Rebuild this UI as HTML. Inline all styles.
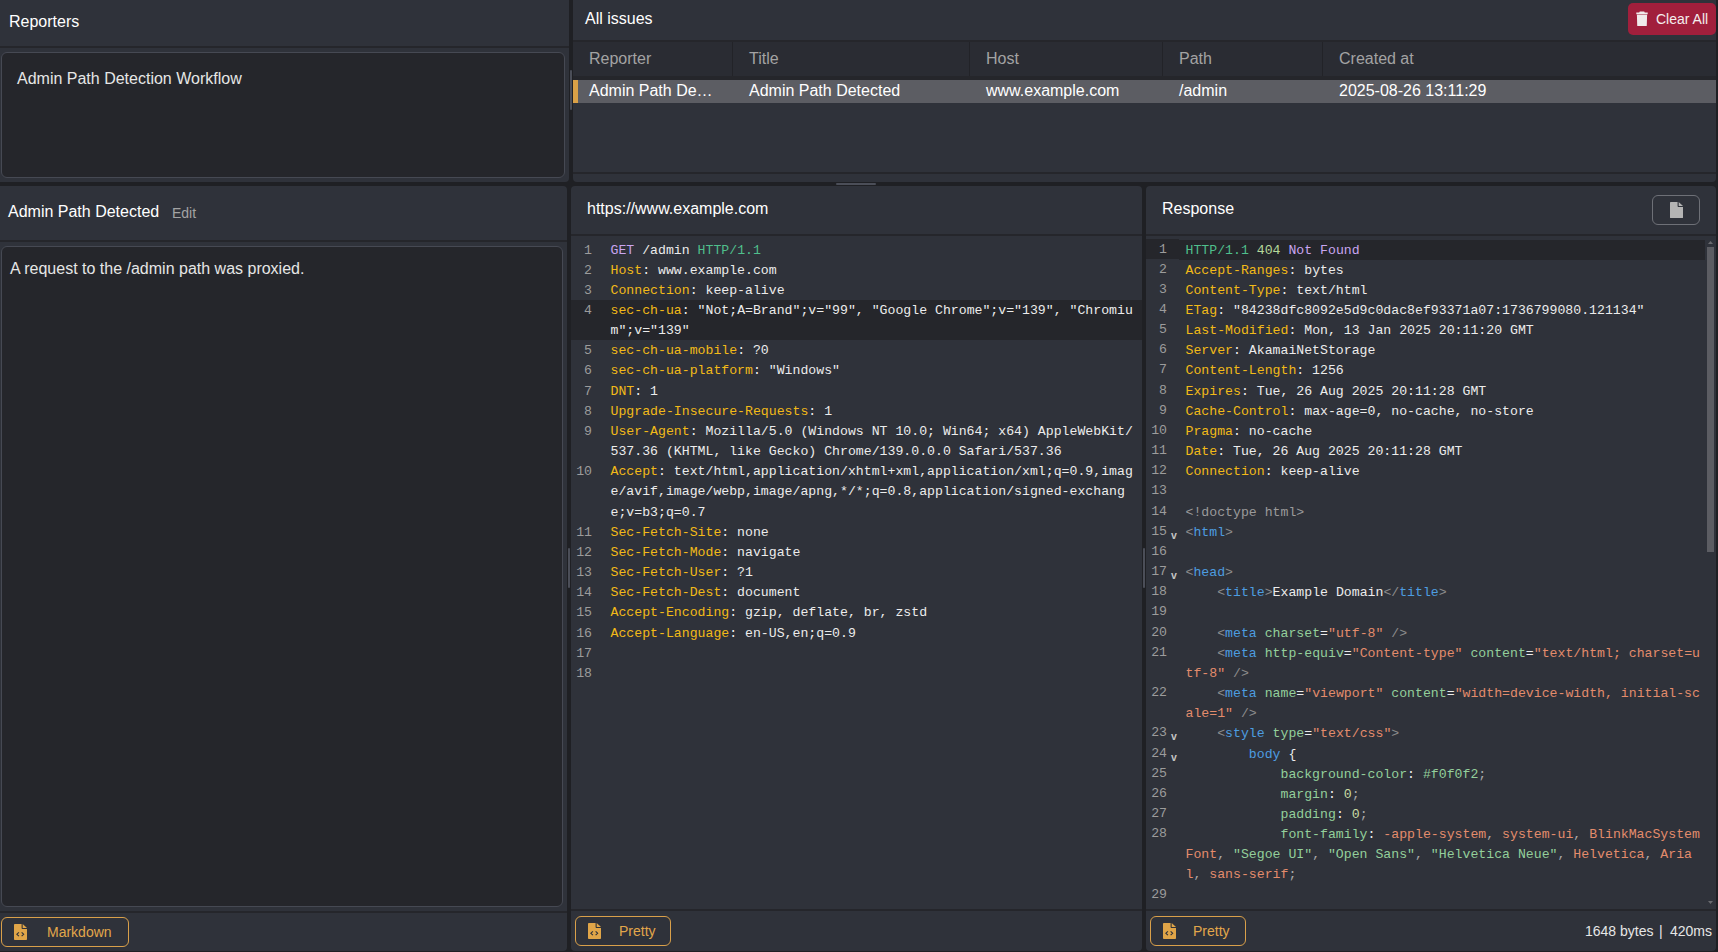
<!DOCTYPE html>
<html><head><meta charset="utf-8">
<style>
*{box-sizing:border-box;margin:0;padding:0}
html,body{width:1718px;height:952px;overflow:hidden;background:#1f2024;font-family:"Liberation Sans",sans-serif;color:#fff}
.p{position:absolute;background:#2f323a;border-radius:4px;overflow:hidden}
.a{position:absolute;white-space:pre}
.ln{position:absolute;background:#25262b}
.t16{font-size:16px;line-height:16px}
.t14{font-size:14px;line-height:14px}
.box{position:absolute;background:#25262b;border:1px solid #464953;border-radius:6px}
.hd{color:#a3a3a3}
.btn{position:absolute;border:1px solid #d9a04a;border-radius:6px;color:#e2a74b}
.code{font-family:"Liberation Mono",monospace;font-size:13.2px;line-height:20.16px}
.code .r{position:absolute;left:39.5px;white-space:pre;height:20.16px}
.num{color:#9c9c9c;position:absolute;left:0;width:21px;text-align:right;white-space:pre}
.hl{position:absolute;left:0;right:0;background:#25262b}
.resp .hl{right:11px;left:33px;margin-top:1px}
.resp .hlg{position:absolute;left:0;width:33px;background:#25262b}
.fold{position:absolute;left:25px;font-family:"Liberation Sans",sans-serif;font-size:10.5px;font-weight:bold;color:#c4c4c4;margin-top:3px}
.xt{color:#4d9de0}
.xb{color:#8c8c8c}
.xa{color:#93cf9b}
.xq{color:#e38c6c}
.xn{color:#c9dca4}
.xc{color:#9a9a9a}
.xp{color:#a9a9a9}
.xk{color:#f2ba18}
.xv{color:#ececec}
.xm{color:#c9a5f0}
.xg{color:#4fbf8c}
.xs{color:#b5d89a}
</style></head><body>

<!-- top-left Reporters panel -->
<div class="p" style="left:0;top:0;width:569px;height:182px;border-radius:0 0 4px 0">
  <div class="a t16" style="left:9px;top:14px">Reporters</div>
  <div class="ln" style="left:0;top:46px;width:569px;height:2px"></div>
  <div class="box" style="left:1px;top:52px;width:564px;height:126px"></div>
  <div class="a t16" style="left:17px;top:71px;color:#e6e6e6">Admin Path Detection Workflow</div>
</div>

<!-- top-right All issues panel -->
<div class="p" style="left:573px;top:0;width:1143px;height:182px;border-radius:0 0 4px 4px">
  <div class="a t16" style="left:12px;top:11px">All issues</div>
  <div class="ln" style="left:0;top:40px;width:1143px;height:2px"></div>
  <div style="position:absolute;left:0;top:42px;width:1143px;height:34px;background:#2a2c33"></div>
  <div style="position:absolute;left:159px;top:42px;width:1px;height:34px;background:#222328"></div>
  <div style="position:absolute;left:396px;top:42px;width:1px;height:34px;background:#222328"></div>
  <div style="position:absolute;left:589px;top:42px;width:1px;height:34px;background:#222328"></div>
  <div style="position:absolute;left:749px;top:42px;width:1px;height:34px;background:#222328"></div>
  <div class="ln" style="left:0;top:76px;width:1143px;height:4px"></div>
  <div class="a t16 hd" style="left:16px;top:51px">Reporter</div>
  <div class="a t16 hd" style="left:176px;top:51px">Title</div>
  <div class="a t16 hd" style="left:413px;top:51px">Host</div>
  <div class="a t16 hd" style="left:606px;top:51px">Path</div>
  <div class="a t16 hd" style="left:766px;top:51px">Created at</div>
  <div style="position:absolute;left:0;top:80px;width:1143px;height:23px;background:#5c5d63"></div>
  <div style="position:absolute;left:0;top:80px;width:5px;height:23px;background:#daa147"></div>
  <div class="a t16" style="left:16px;top:83px">Admin Path De…</div>
  <div class="a t16" style="left:176px;top:83px">Admin Path Detected</div>
  <div class="a t16" style="left:413px;top:83px">www.example.com</div>
  <div class="a t16" style="left:606px;top:83px">/admin</div>
  <div class="a t16" style="left:766px;top:83px">2025-08-26 13:11:29</div>
  <div class="ln" style="left:0;top:172px;width:1143px;height:2px"></div>
  <div style="position:absolute;left:1055px;top:3px;width:88px;height:32px;background:#a11f3c;border-radius:5px"></div>
  <div class="a t14" style="left:1083px;top:12px;color:#f4eeee">Clear All</div>
  <svg style="position:absolute;left:1063px;top:11px" width="12" height="15" viewBox="0 0 12 15"><path fill="#f0ebeb" d="M3.8 0.6H8.2L8.8 1.4H11.7V3.2H0.3V1.4H3.2Z M0.9 3.8H11.1L10.8 14.5Q10.75 15 10.2 15H1.8Q1.25 15 1.2 14.5Z"/></svg>
</div>

<!-- bottom-left panel -->
<div class="p" style="left:0;top:186px;width:567px;height:765px;border-radius:0 4px 4px 0">
  <div class="a t16" style="left:8px;top:18px">Admin Path Detected</div>
  <div class="a t14" style="left:172px;top:20px;color:#a3a3a3">Edit</div>
  <div class="ln" style="left:0;top:54px;width:567px;height:2px"></div>
  <div class="box" style="left:1px;top:60px;width:562px;height:661px"></div>
  <div class="a t16" style="left:10px;top:75px;color:#e6e6e6">A request to the /admin path was proxied.</div>
  <div class="ln" style="left:0;top:725px;width:567px;height:2px"></div>
  <div class="btn" style="left:1px;top:731px;width:128px;height:30px"></div>
  <div class="a t14" style="left:47px;top:739px;color:#e2a74b">Markdown</div>
  <svg style="position:absolute;left:14px;top:738px" width="13" height="16" viewBox="0 0 384 512" preserveAspectRatio="none"><path fill="#e0a548" d="M24 0H224V128c0 17.7 14.3 32 32 32H384V488c0 13.3-10.7 24-24 24H24c-13.3 0-24-10.7-24-24V24C0 10.7 10.7 0 24 0Z"/><path fill="#e0a548" d="M256 0L384 128H256Z"/><path d="M145 266L85 328L145 390M225 266L285 328L225 390" stroke="#2f323a" stroke-width="34" fill="none"/></svg>
</div>

<!-- bottom-middle request panel -->
<div class="p" style="left:571px;top:186px;width:571px;height:765px">
  <div class="a t16" style="left:16px;top:15px">https://www.example.com</div>
  <div class="ln" style="left:0;top:48px;width:571px;height:2px"></div>
  <div class="code" style="position:absolute;left:0;top:0;width:571px;height:723px">
<div class="num" style="top:55px">1</div>
<div class="r" style="top:55px"><span class="xm">GET</span><span class="xv"> /admin </span><span class="xg">HTTP/1.1</span></div>
<div class="num" style="top:75px">2</div>
<div class="r" style="top:75px"><span class="xk">Host</span><span class="xv">: www.example.com</span></div>
<div class="num" style="top:95px">3</div>
<div class="r" style="top:95px"><span class="xk">Connection</span><span class="xv">: keep-alive</span></div>
<div class="hl" style="top:114px;height:40px"></div>
<div class="num" style="top:115px">4</div>
<div class="r" style="top:115px"><span class="xk">sec-ch-ua</span><span class="xv">: "Not;A=Brand";v="99", "Google Chrome";v="139", "Chromiu</span></div>
<div class="r" style="top:135px"><span class="xv">m";v="139"</span></div>
<div class="num" style="top:155px">5</div>
<div class="r" style="top:155px"><span class="xk">sec-ch-ua-mobile</span><span class="xv">: ?0</span></div>
<div class="num" style="top:175px">6</div>
<div class="r" style="top:175px"><span class="xk">sec-ch-ua-platform</span><span class="xv">: "Windows"</span></div>
<div class="num" style="top:196px">7</div>
<div class="r" style="top:196px"><span class="xk">DNT</span><span class="xv">: 1</span></div>
<div class="num" style="top:216px">8</div>
<div class="r" style="top:216px"><span class="xk">Upgrade-Insecure-Requests</span><span class="xv">: 1</span></div>
<div class="num" style="top:236px">9</div>
<div class="r" style="top:236px"><span class="xk">User-Agent</span><span class="xv">: Mozilla/5.0 (Windows NT 10.0; Win64; x64) AppleWebKit/</span></div>
<div class="r" style="top:256px"><span class="xv">537.36 (KHTML, like Gecko) Chrome/139.0.0.0 Safari/537.36</span></div>
<div class="num" style="top:276px">10</div>
<div class="r" style="top:276px"><span class="xk">Accept</span><span class="xv">: text/html,application/xhtml+xml,application/xml;q=0.9,imag</span></div>
<div class="r" style="top:296px"><span class="xv">e/avif,image/webp,image/apng,*/*;q=0.8,application/signed-exchang</span></div>
<div class="r" style="top:317px"><span class="xv">e;v=b3;q=0.7</span></div>
<div class="num" style="top:337px">11</div>
<div class="r" style="top:337px"><span class="xk">Sec-Fetch-Site</span><span class="xv">: none</span></div>
<div class="num" style="top:357px">12</div>
<div class="r" style="top:357px"><span class="xk">Sec-Fetch-Mode</span><span class="xv">: navigate</span></div>
<div class="num" style="top:377px">13</div>
<div class="r" style="top:377px"><span class="xk">Sec-Fetch-User</span><span class="xv">: ?1</span></div>
<div class="num" style="top:397px">14</div>
<div class="r" style="top:397px"><span class="xk">Sec-Fetch-Dest</span><span class="xv">: document</span></div>
<div class="num" style="top:417px">15</div>
<div class="r" style="top:417px"><span class="xk">Accept-Encoding</span><span class="xv">: gzip, deflate, br, zstd</span></div>
<div class="num" style="top:438px">16</div>
<div class="r" style="top:438px"><span class="xk">Accept-Language</span><span class="xv">: en-US,en;q=0.9</span></div>
<div class="num" style="top:458px">17</div>
<div class="r" style="top:458px"></div>
<div class="num" style="top:478px">18</div>
<div class="r" style="top:478px"></div>
  </div>
  <div class="ln" style="left:0;top:723px;width:571px;height:2px"></div>
  <div class="btn" style="left:4px;top:730px;width:96px;height:30px"></div>
  <div class="a t14" style="left:48px;top:738px;color:#e2a74b">Pretty</div>
  <svg style="position:absolute;left:17px;top:737px" width="13" height="16" viewBox="0 0 384 512" preserveAspectRatio="none"><path fill="#e0a548" d="M24 0H224V128c0 17.7 14.3 32 32 32H384V488c0 13.3-10.7 24-24 24H24c-13.3 0-24-10.7-24-24V24C0 10.7 10.7 0 24 0Z"/><path fill="#e0a548" d="M256 0L384 128H256Z"/><path d="M145 266L85 328L145 390M225 266L285 328L225 390" stroke="#2f323a" stroke-width="34" fill="none"/></svg>
</div>

<!-- bottom-right response panel -->
<div class="p" style="left:1146px;top:186px;width:570px;height:765px">
  <div class="a t16" style="left:16px;top:15px">Response</div>
  <div style="position:absolute;left:506px;top:9px;width:48px;height:30px;border:1px solid #6e7077;border-radius:6px"></div>
  <div class="ln" style="left:0;top:48px;width:570px;height:2px"></div>
  <div class="code resp" style="position:absolute;left:0;top:0;width:570px;height:723px">
<div class="hl" style="top:53px;height:20px"></div>
<div class="hlg" style="top:53px;height:20px"></div>
<div class="num" style="top:54px">1</div>
<div class="r" style="top:55px"><span class="xg">HTTP/1.1</span><span class="xv"> </span><span class="xs">404</span><span class="xv"> </span><span class="xm">Not Found</span></div>
<div class="num" style="top:74px">2</div>
<div class="r" style="top:75px"><span class="xk">Accept-Ranges</span><span class="xv">: bytes</span></div>
<div class="num" style="top:94px">3</div>
<div class="r" style="top:95px"><span class="xk">Content-Type</span><span class="xv">: text/html</span></div>
<div class="num" style="top:114px">4</div>
<div class="r" style="top:115px"><span class="xk">ETag</span><span class="xv">: "84238dfc8092e5d9c0dac8ef93371a07:1736799080.121134"</span></div>
<div class="num" style="top:134px">5</div>
<div class="r" style="top:135px"><span class="xk">Last-Modified</span><span class="xv">: Mon, 13 Jan 2025 20:11:20 GMT</span></div>
<div class="num" style="top:154px">6</div>
<div class="r" style="top:155px"><span class="xk">Server</span><span class="xv">: AkamaiNetStorage</span></div>
<div class="num" style="top:174px">7</div>
<div class="r" style="top:175px"><span class="xk">Content-Length</span><span class="xv">: 1256</span></div>
<div class="num" style="top:195px">8</div>
<div class="r" style="top:196px"><span class="xk">Expires</span><span class="xv">: Tue, 26 Aug 2025 20:11:28 GMT</span></div>
<div class="num" style="top:215px">9</div>
<div class="r" style="top:216px"><span class="xk">Cache-Control</span><span class="xv">: max-age=0, no-cache, no-store</span></div>
<div class="num" style="top:235px">10</div>
<div class="r" style="top:236px"><span class="xk">Pragma</span><span class="xv">: no-cache</span></div>
<div class="num" style="top:255px">11</div>
<div class="r" style="top:256px"><span class="xk">Date</span><span class="xv">: Tue, 26 Aug 2025 20:11:28 GMT</span></div>
<div class="num" style="top:275px">12</div>
<div class="r" style="top:276px"><span class="xk">Connection</span><span class="xv">: keep-alive</span></div>
<div class="num" style="top:295px">13</div>
<div class="r" style="top:296px"></div>
<div class="num" style="top:316px">14</div>
<div class="r" style="top:317px"><span class="xc">&lt;!doctype html&gt;</span></div>
<div class="num" style="top:336px">15</div>
<div class="fold" style="top:336px">v</div>
<div class="r" style="top:337px"><span class="xv"></span><span class="xb">&lt;</span><span class="xt">html</span><span class="xb">&gt;</span></div>
<div class="num" style="top:356px">16</div>
<div class="r" style="top:357px"></div>
<div class="num" style="top:376px">17</div>
<div class="fold" style="top:376px">v</div>
<div class="r" style="top:377px"><span class="xv"></span><span class="xb">&lt;</span><span class="xt">head</span><span class="xb">&gt;</span></div>
<div class="num" style="top:396px">18</div>
<div class="r" style="top:397px"><span class="xv">    </span><span class="xb">&lt;</span><span class="xt">title</span><span class="xb">&gt;</span><span class="xv">Example Domain</span><span class="xb">&lt;/</span><span class="xt">title</span><span class="xb">&gt;</span></div>
<div class="num" style="top:416px">19</div>
<div class="r" style="top:417px"></div>
<div class="num" style="top:437px">20</div>
<div class="r" style="top:438px"><span class="xv">    </span><span class="xb">&lt;</span><span class="xt">meta</span><span class="xv"> </span><span class="xa">charset</span><span class="xv">=</span><span class="xq">"utf-8"</span><span class="xb"> /&gt;</span></div>
<div class="num" style="top:457px">21</div>
<div class="r" style="top:458px"><span class="xv">    </span><span class="xb">&lt;</span><span class="xt">meta</span><span class="xv"> </span><span class="xa">http-equiv</span><span class="xv">=</span><span class="xq">"Content-type"</span><span class="xv"> </span><span class="xa">content</span><span class="xv">=</span><span class="xq">"text/html; charset=u</span></div>
<div class="r" style="top:478px"><span class="xq">tf-8"</span><span class="xb"> /&gt;</span></div>
<div class="num" style="top:497px">22</div>
<div class="r" style="top:498px"><span class="xv">    </span><span class="xb">&lt;</span><span class="xt">meta</span><span class="xv"> </span><span class="xa">name</span><span class="xv">=</span><span class="xq">"viewport"</span><span class="xv"> </span><span class="xa">content</span><span class="xv">=</span><span class="xq">"width=device-width, initial-sc</span></div>
<div class="r" style="top:518px"><span class="xq">ale=1"</span><span class="xb"> /&gt;</span></div>
<div class="num" style="top:537px">23</div>
<div class="fold" style="top:537px">v</div>
<div class="r" style="top:538px"><span class="xv">    </span><span class="xb">&lt;</span><span class="xt">style</span><span class="xv"> </span><span class="xa">type</span><span class="xv">=</span><span class="xq">"text/css"</span><span class="xb">&gt;</span></div>
<div class="num" style="top:558px">24</div>
<div class="fold" style="top:558px">v</div>
<div class="r" style="top:559px"><span class="xv">        </span><span class="xt">body</span><span class="xv"> {</span></div>
<div class="num" style="top:578px">25</div>
<div class="r" style="top:579px"><span class="xv">            </span><span class="xa">background-color</span><span class="xv">: </span><span class="xa">#f0f0f2</span><span class="xp">;</span></div>
<div class="num" style="top:598px">26</div>
<div class="r" style="top:599px"><span class="xv">            </span><span class="xa">margin</span><span class="xv">: </span><span class="xn">0</span><span class="xp">;</span></div>
<div class="num" style="top:618px">27</div>
<div class="r" style="top:619px"><span class="xv">            </span><span class="xa">padding</span><span class="xv">: </span><span class="xn">0</span><span class="xp">;</span></div>
<div class="num" style="top:638px">28</div>
<div class="r" style="top:639px"><span class="xv">            </span><span class="xa">font-family</span><span class="xv">: </span><span class="xq">-apple-system</span><span class="xp">, </span><span class="xq">system-ui</span><span class="xp">, </span><span class="xq">BlinkMacSystem</span></div>
<div class="r" style="top:659px"><span class="xq">Font</span><span class="xp">, </span><span class="xa">"Segoe UI"</span><span class="xp">, </span><span class="xa">"Open Sans"</span><span class="xp">, </span><span class="xa">"Helvetica Neue"</span><span class="xp">, </span><span class="xq">Helvetica</span><span class="xp">, </span><span class="xq">Aria</span></div>
<div class="r" style="top:679px"><span class="xq">l</span><span class="xp">, </span><span class="xq">sans-serif</span><span class="xp">;</span></div>
<div class="num" style="top:699px">29</div>
<div class="r" style="top:700px"></div>
  </div>
  <div class="ln" style="left:0;top:723px;width:570px;height:2px"></div>
  <div class="btn" style="left:4px;top:730px;width:96px;height:30px"></div>
  <div class="a t14" style="left:47px;top:738px;color:#e2a74b">Pretty</div>
  <svg style="position:absolute;left:17px;top:737px" width="13" height="16" viewBox="0 0 384 512" preserveAspectRatio="none"><path fill="#e0a548" d="M24 0H224V128c0 17.7 14.3 32 32 32H384V488c0 13.3-10.7 24-24 24H24c-13.3 0-24-10.7-24-24V24C0 10.7 10.7 0 24 0Z"/><path fill="#e0a548" d="M256 0L384 128H256Z"/><path d="M145 266L85 328L145 390M225 266L285 328L225 390" stroke="#2f323a" stroke-width="34" fill="none"/></svg>
  <svg style="position:absolute;left:523.5px;top:16px" width="13" height="16" viewBox="0 0 384 512" preserveAspectRatio="none"><path fill="#b4b4b4" d="M20 0H224V128c0 17.7 14.3 32 32 32H384V492c0 11-9 20-20 20H20c-11 0-20-9-20-20V20C0 9 9 0 20 0Z"/><path fill="#b4b4b4" d="M256 0L384 128H256Z"/></svg>
  <div class="a t14" style="left:439px;top:738px;color:#e6e6e6">1648 bytes</div><div class="a t14" style="left:513px;top:738px;color:#e6e6e6">|</div><div class="a t14" style="left:524px;top:738px;color:#e6e6e6">420ms</div>
</div>


<div style="position:absolute;left:570px;top:70px;width:2px;height:40px;background:#4b4e58;border-radius:1px"></div>
<div style="position:absolute;left:836px;top:183px;width:40px;height:2px;background:#4b4e58;border-radius:1px"></div>
<div style="position:absolute;left:568px;top:548px;width:2px;height:40px;background:#4b4e58;border-radius:1px"></div>
<div style="position:absolute;left:1143px;top:548px;width:2px;height:40px;background:#4b4e58;border-radius:1px"></div>
<div style="position:absolute;left:1707px;top:247px;width:7px;height:305px;background:#5c5d63"></div>
<svg style="position:absolute;left:1707px;top:240px" width="7" height="5"><path d="M1 4L3.5 1L6 4Z" fill="#6a6b70"/></svg>
<svg style="position:absolute;left:1707px;top:900px" width="7" height="5"><path d="M1 1L3.5 4L6 1Z" fill="#6a6b70"/></svg>
</body></html>
